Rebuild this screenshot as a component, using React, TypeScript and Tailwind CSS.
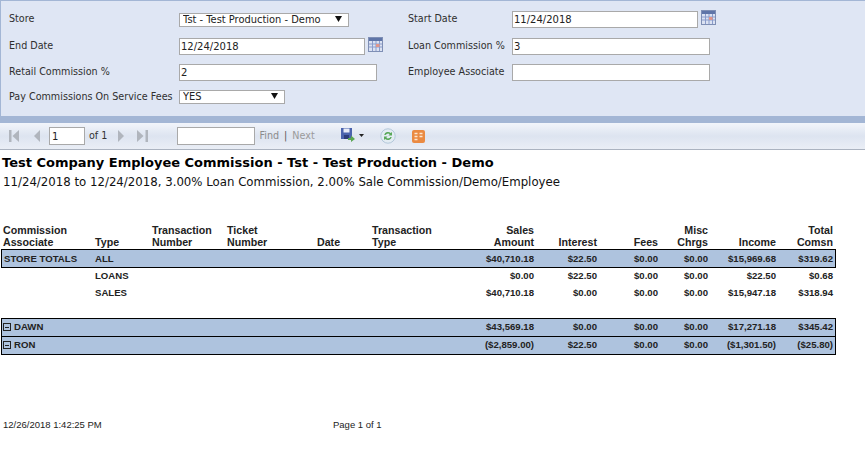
const verdana = "font-['DejaVu_Sans',sans-serif]"

function CalendarIcon() {
  return (
    <svg width="15" height="15" viewBox="0 0 15 15" className="shrink-0 -mt-[1px]">
      <rect x="0.5" y="0.5" width="14" height="14" fill="#dbe2f2" stroke="#7f8fb5" />
      <rect x="1" y="1" width="13" height="3" fill="#5f75a8" />
      <path d="M1 7h13M1 10h13M4.5 4v10M8 4v10M11.5 4v10" stroke="#8a9ccb" strokeWidth="1" />
      <rect x="8" y="7" width="3.5" height="3" fill="#e0958a" />
    </svg>
  )
}

function SelectBox({ value, width }: { value: string; width: string }) {
  return (
    <div className={`relative ${width} h-[14px]`}>
      <select
        defaultValue={value}
        className="block w-full h-full appearance-none bg-white border border-[#a9a9a9] pl-[3px] text-[9.9px] leading-none text-[#222] outline-none"
      >
        <option>{value}</option>
      </select>
      <svg width="7" height="6" viewBox="0 0 7 6" className="absolute right-[7px] top-[3px]">
        <path d="M0 0h7L3.5 6z" fill="#111" />
      </svg>
    </div>
  )
}

function TextBox({ value, width }: { value: string; width: string }) {
  return (
    <input
      defaultValue={value}
      className={`${width} h-[17px] bg-white border border-[#a9a9a9] px-[1px] text-[10px] text-[#222] outline-none`}
    />
  )
}

function Label({ text }: { text: string }) {
  return <div className="text-[9.6px] text-[#2f2f2f] whitespace-nowrap">{text}</div>
}

function FilterPanel() {
  return (
    <div className={`${verdana} h-[116px] bg-[#dfe6f4] border-t border-l border-[#a3b6d5] pl-[8px] pt-[5px]`}>
      <div className="grid grid-cols-[170px_229px_104px_1fr] grid-rows-[27px_26px_27px_22px] items-center">
        <Label text="Store" />
        <SelectBox value="Tst - Test Production - Demo" width="w-[170px]" />
        <Label text="Start Date" />
        <div className="flex items-start gap-[3px]">
          <TextBox value="11/24/2018" width="w-[186px]" />
          <CalendarIcon />
        </div>
        <Label text="End Date" />
        <div className="flex items-start gap-[3px]">
          <TextBox value="12/24/2018" width="w-[186px]" />
          <CalendarIcon />
        </div>
        <Label text="Loan Commission %" />
        <TextBox value="3" width="w-[198px]" />
        <Label text="Retail Commission %" />
        <TextBox value="2" width="w-[198px]" />
        <Label text="Employee Associate" />
        <TextBox value="" width="w-[198px]" />
        <Label text="Pay Commissions On Service Fees" />
        <SelectBox value="YES" width="w-[106px]" />
      </div>
    </div>
  )
}

function Toolbar() {
  return (
    <div className={`${verdana} h-[27px] flex items-center border-b border-[#abb3c0] bg-gradient-to-b from-[#f2f5fb] via-[#dde4f0] to-[#eaeef6] text-[9.6px]`}>
      <svg width="11" height="12" viewBox="0 0 11 12" className="ml-[9px]">
        <rect x="0" y="0" width="2.5" height="12" fill="#b0b5bd" />
        <path d="M10 0v12L3.5 6z" fill="#b0b5bd" />
      </svg>
      <svg width="6" height="12" viewBox="0 0 6 12" className="ml-[14px]">
        <path d="M6 0v12L0 6z" fill="#b0b5bd" />
      </svg>
      <input
        defaultValue="1"
        className="ml-[9px] w-[36px] h-[18px] bg-white border border-[#a9a9a9] px-[2px] text-[10px] text-[#222] outline-none"
      />
      <span className="ml-[4px] text-[#333]">of 1</span>
      <svg width="6" height="12" viewBox="0 0 6 12" className="ml-[11px]">
        <path d="M0 0v12L6 6z" fill="#b0b5bd" />
      </svg>
      <svg width="11" height="12" viewBox="0 0 11 12" className="ml-[13px]">
        <path d="M0 0v12L6.5 6z" fill="#b0b5bd" />
        <rect x="8.5" y="0" width="2.5" height="12" fill="#b0b5bd" />
      </svg>
      <input className="ml-[29px] w-[78px] h-[18px] bg-white border border-[#a9a9a9] outline-none" />
      <span className="ml-[4px] text-[#8c8c8c]">Find</span>
      <span className="ml-[5px] text-[#555]">|</span>
      <span className="ml-[5px] text-[#9a9a9a]">Next</span>
      <svg width="14" height="14" viewBox="0 0 14 14" className="ml-[26px] -mt-[3px]">
        <path d="M0 0h11v11H0z" fill="#4a63ad" />
        <rect x="2.5" y="0.5" width="6" height="4" fill="#e6ebf7" />
        <rect x="3" y="7" width="5" height="4" fill="#2c3d7a" />
        <path d="M7 10h3V7.5L14 11l-4 3v-2H7z" fill="#5aa651" />
      </svg>
      <svg width="5" height="3" viewBox="0 0 5 3" className="ml-[4px] -mt-[2px]">
        <path d="M0 0h5L2.5 3z" fill="#222" />
      </svg>
      <svg width="16" height="16" viewBox="0 0 16 16" className="ml-[16px]">
        <circle cx="8" cy="8" r="7.2" fill="#e3ecf3" stroke="#b4c8da" />
        <path d="M4.2 7a4 4 0 0 1 6.6-2L12 4v3.6H8.4l1.3-1.3A2.6 2.6 0 0 0 5.6 7z" fill="#5aa85a" />
        <path d="M11.8 9a4 4 0 0 1-6.6 2L4 12V8.4h3.6L6.3 9.7a2.6 2.6 0 0 0 4.1-.7z" fill="#5aa85a" />
      </svg>
      <svg width="13" height="13" viewBox="0 0 13 13" className="ml-[16px]">
        <rect width="13" height="13" rx="2" fill="#ea8a42" />
        <path d="M2.5 3.5h3M7.5 3.5h3M2.5 6.5h3M7.5 6.5h3M2.5 9.5h3" stroke="#fde6cf" strokeWidth="1.4" />
      </svg>
    </div>
  )
}

type RowData = {
  first?: string
  collapsed?: boolean
  type?: string
  values: string[]
}

const gridCols =
  "grid grid-cols-[92px_57px_75px_90px_55px_105px_61px_63px_61px_50px_68px_57px] items-center"

function ReportRow({ first, collapsed, type, values, band }: RowData & { band?: boolean }) {
  return (
    <div className={`${gridCols} w-[835px] text-[9.6px] font-bold text-[#222] ${band ? "h-[19px] bg-[#aec3de] border-y border-r border-black shadow-[inset_1px_0_0_#000] -mb-[1px]" : "h-[17px]"} ${band && !collapsed ? "pt-[1px]" : ""}`}>
      <div className={`${collapsed ? "pl-[2px]" : "pl-[3px]"} flex items-center gap-[3px] whitespace-nowrap`}>
        {collapsed && (
          <span className="inline-flex w-[8px] h-[8px] border border-[#222] items-center justify-center">
            <span className="w-[4px] h-[1px] bg-[#222]" />
          </span>
        )}
        {first}
      </div>
      <div className="pl-[2px]">{type}</div>
      <div />
      <div />
      <div />
      <div />
      {values.map((v, i) => (
        <div key={i} className="text-right pr-[2px]">
          {v}
        </div>
      ))}
    </div>
  )
}

function HeaderCell({ lines, right }: { lines: string[]; right?: boolean }) {
  return (
    <div className={`self-end px-[2px] ${right ? "text-right" : ""}`}>
      {lines.map((l) => (
        <div key={l}>{l}</div>
      ))}
    </div>
  )
}

function Report() {
  return (
    <div className="pl-[2px] pt-[4px]">
      <div className={`${verdana} text-[13px] font-bold leading-[17px] text-black`}>
        Test Company Employee Commission - Tst - Test Production - Demo
      </div>
      <div className={`${verdana} text-[11.75px] leading-[16px] mt-[3px] pl-[1px] text-[#111]`}>
        11/24/2018 to 12/24/2018, 3.00% Loan Commission, 2.00% Sale Commission/Demo/Employee
      </div>
      <div className="-ml-[1px] mt-[34px] font-['Liberation_Sans',sans-serif]">
        <div className={`${gridCols} w-[835px] text-[10.67px] leading-[12px] font-bold text-[#222] mb-[1px]`}>
          <HeaderCell lines={["Commission", "Associate"]} />
          <HeaderCell lines={["Type"]} />
          <HeaderCell lines={["Transaction", "Number"]} />
          <HeaderCell lines={["Ticket", "Number"]} />
          <HeaderCell lines={["Date"]} />
          <HeaderCell lines={["Transaction", "Type"]} />
          <HeaderCell lines={["Sales", "Amount"]} right />
          <HeaderCell lines={["Interest"]} right />
          <HeaderCell lines={["Fees"]} right />
          <HeaderCell lines={["Misc", "Chrgs"]} right />
          <HeaderCell lines={["Income"]} right />
          <HeaderCell lines={["Total", "Comsn"]} right />
        </div>
        <ReportRow band first="STORE TOTALS" type="ALL" values={["$40,710.18", "$22.50", "$0.00", "$0.00", "$15,969.68", "$319.62"]} />
        <div className="pt-[1px]">
          <ReportRow type="LOANS" values={["$0.00", "$22.50", "$0.00", "$0.00", "$22.50", "$0.68"]} />
          <ReportRow type="SALES" values={["$40,710.18", "$0.00", "$0.00", "$0.00", "$15,947.18", "$318.94"]} />
        </div>
        <div className="mt-[16px]">
          <ReportRow band collapsed first="DAWN" values={["$43,569.18", "$0.00", "$0.00", "$0.00", "$17,271.18", "$345.42"]} />
          <ReportRow band collapsed first="RON" values={["($2,859.00)", "$22.50", "$0.00", "$0.00", "($1,301.50)", "($25.80)"]} />
        </div>
        <div className="mt-[64px] flex text-[9.5px] text-[#222]">
          <div className="w-[332px] pl-[2px]">12/26/2018 1:42:25 PM</div>
          <div>Page 1 of 1</div>
        </div>
      </div>
    </div>
  )
}

export default function App() {
  return (
    <div className="w-[865px] h-[474px] bg-white overflow-hidden">
      <FilterPanel />
      <div className="h-[7px] bg-[#a3b6d5]" />
      <Toolbar />
      <Report />
    </div>
  )
}
